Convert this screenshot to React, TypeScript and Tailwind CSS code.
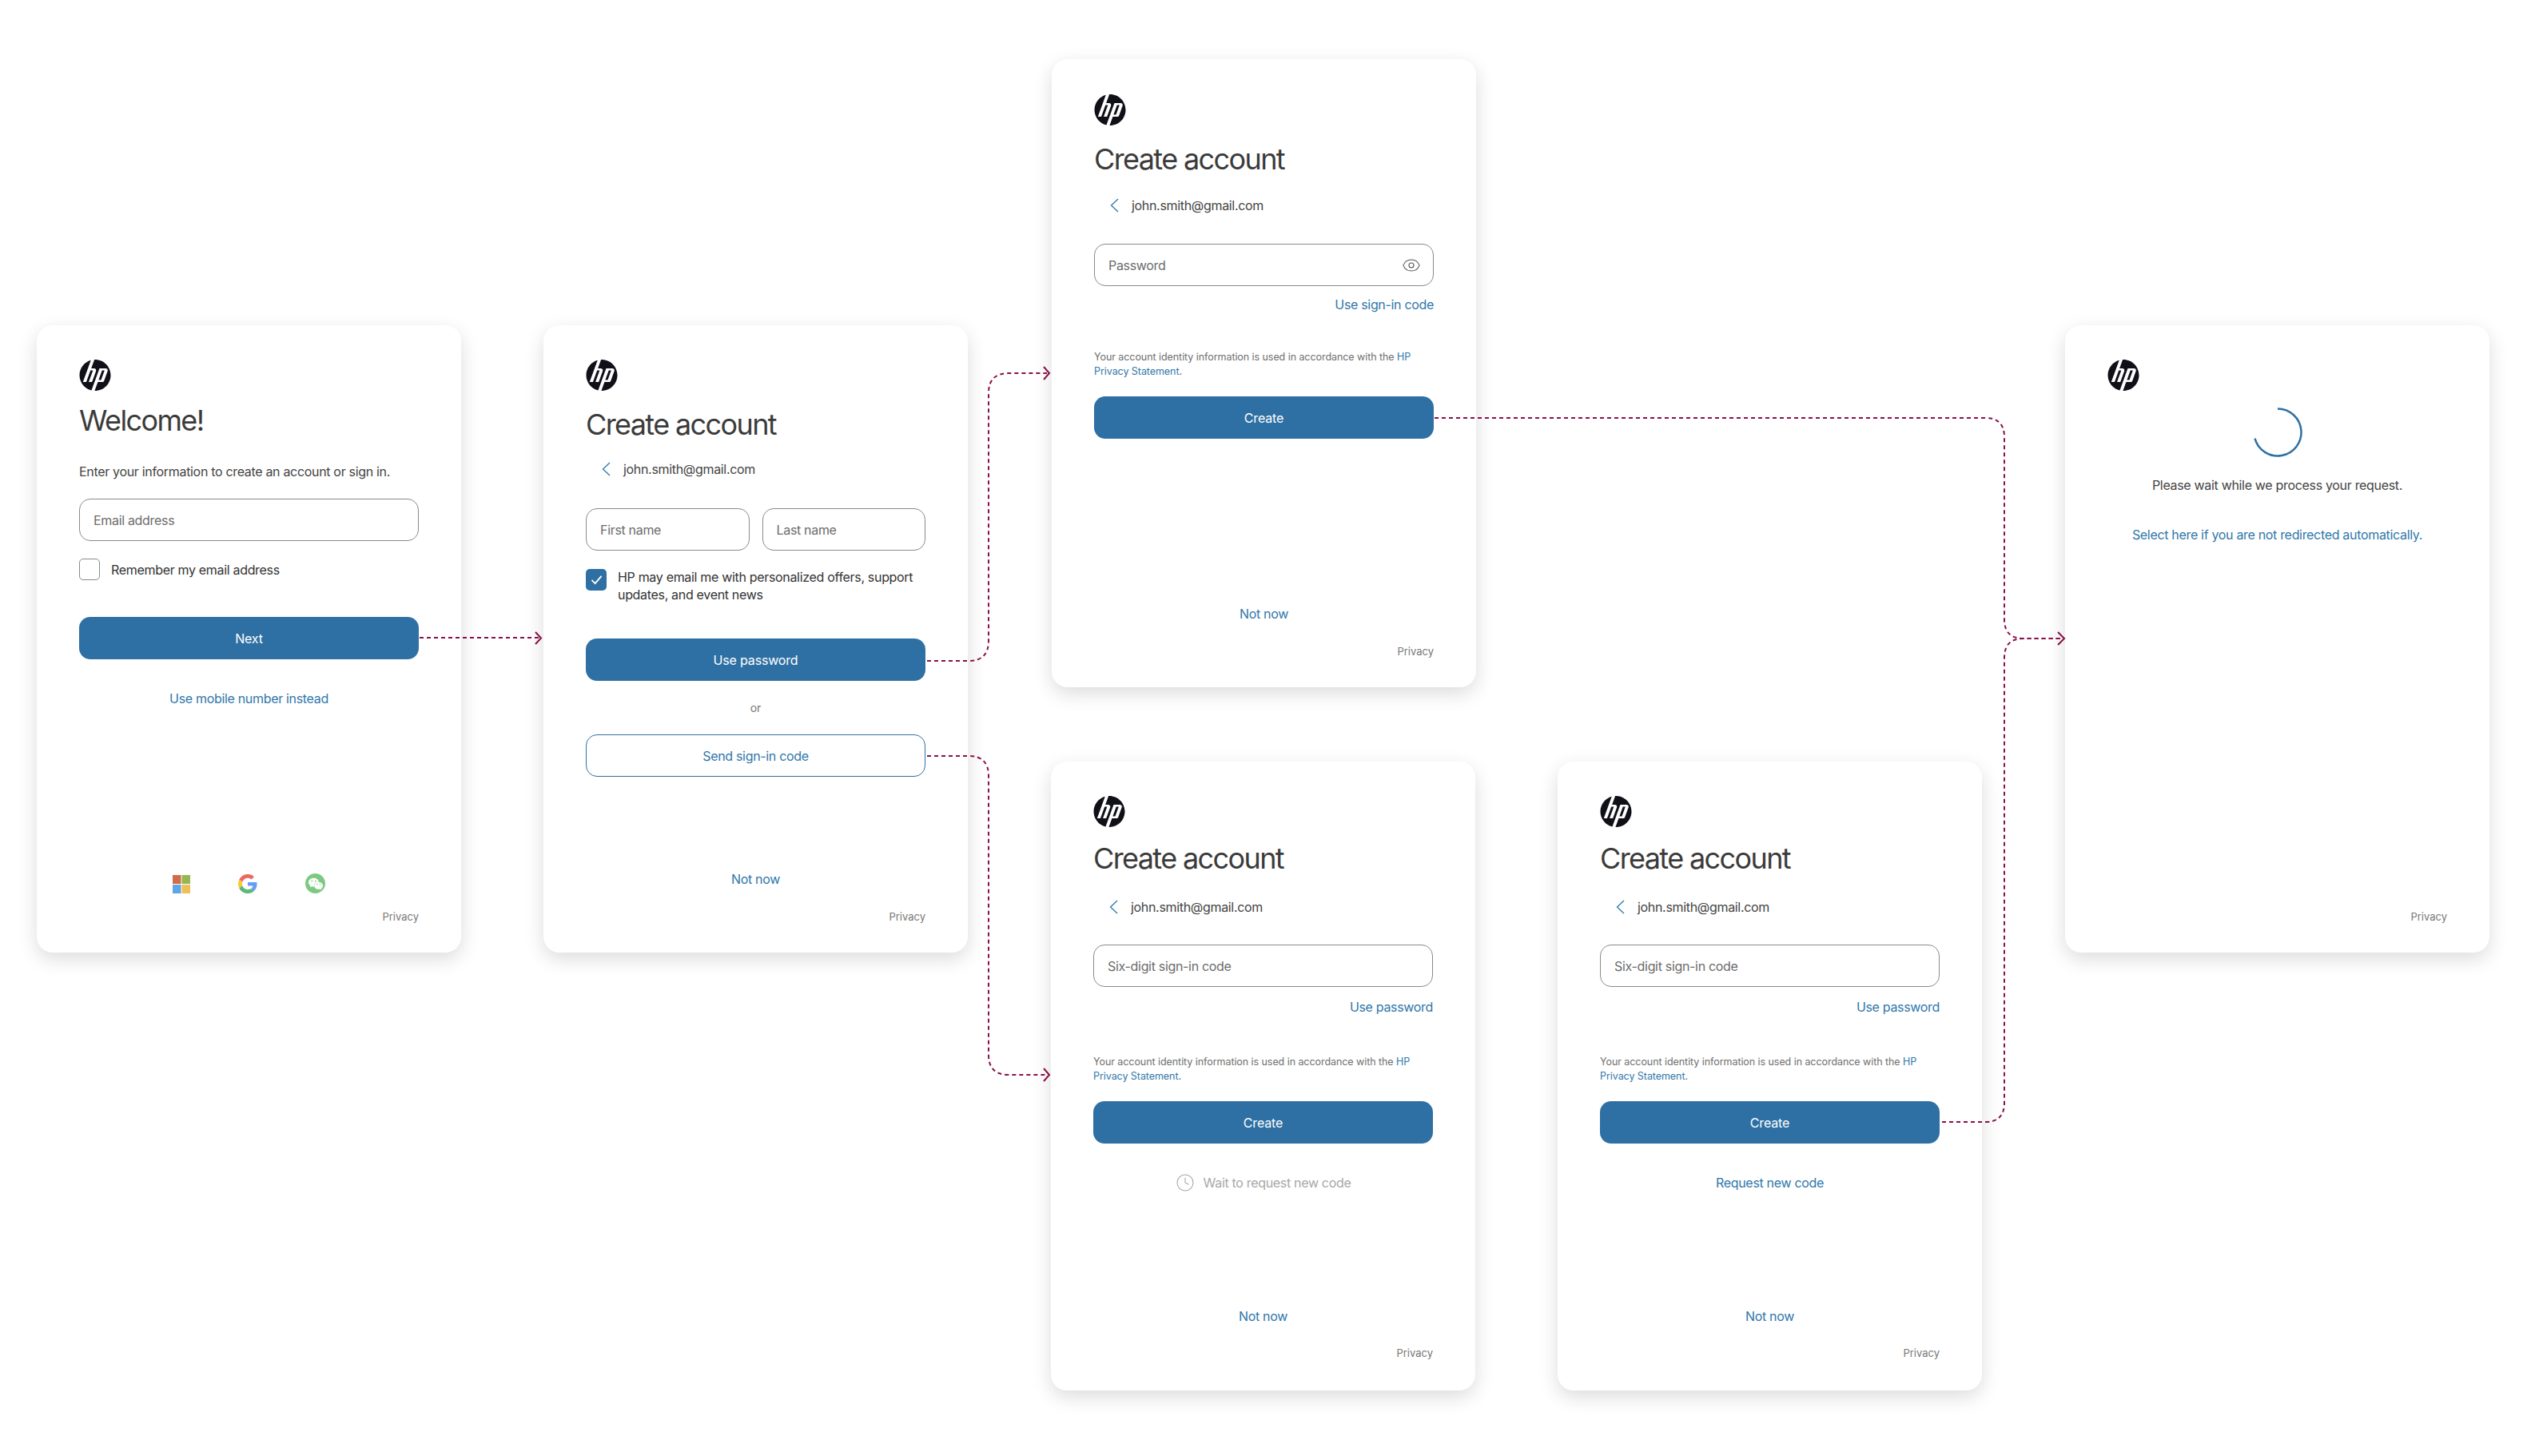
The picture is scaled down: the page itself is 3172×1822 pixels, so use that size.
import type { ReactNode } from "react";
import { Clock, Eye } from "lucide-react";
import { SiHp, SiWechat } from "react-icons/si";

const arrowPaths = [
  "M525 798 H675",
  "M1160 827 H1212 Q1237 827 1237 802 V492 Q1237 467 1262 467 H1310",
  "M1160 946 H1212 Q1237 946 1237 971 V1320 Q1237 1345 1262 1345 H1310",
  "M1795 523 H2484 Q2508 523 2508 547 V775 Q2508 799 2532 799 H2580",
  "M2430 1404 H2484 Q2508 1404 2508 1380 V823 Q2508 799 2532 799 H2580",
];

const arrowHeads = [
  "M670 791 L677 798.5 L670 806",
  "M1306 459 L1313 467 L1306 475",
  "M1306 1337 L1313 1345 L1306 1353",
  "M2575 791 L2583 799 L2575 807",
];

function Card({ className, children }: { className: string; children: ReactNode }) {
  return (
    <div
      className={`flex h-[785px] w-[531px] flex-col rounded-[20px] bg-white px-[53px] shadow-[0_8px_24px_rgba(0,0,0,0.14)] ${className}`}
    >
      {children}
    </div>
  );
}

function Logo() {
  return <SiHp className="h-[39px] w-[40px] shrink-0 text-[#101018]" />;
}

function Title({ className, children }: { className: string; children: ReactNode }) {
  return (
    <h1 className={`h-[44px] text-[36px] leading-[44px] tracking-[-0.045em] text-[#3b3b3b] ${className}`}>{children}</h1>
  );
}

function EmailRow({ className }: { className: string }) {
  return (
    <div className={`flex h-[24px] items-center pl-[20px] ${className}`}>
      <svg viewBox="0 0 11 18" className="h-[18px] w-[11px] text-[#2f77aa]" fill="none" stroke="currentColor" strokeWidth="1.3">
        <path d="M10 1 L1.5 9 L10 17" />
      </svg>
      <span className="ml-[16px] text-[16px] leading-[24px] tracking-[-0.02em] text-[#444444]">john.smith@gmail.com</span>
    </div>
  );
}

function Field({ label, className = "", children }: { label: string; className?: string; children?: ReactNode }) {
  return (
    <div
      className={`flex h-[53px] items-center justify-between rounded-[14px] border-[1.5px] border-[#8a8a8a] bg-white pl-[17px] pr-[15px] text-[16px] tracking-[-0.02em] text-[#6c6c6c] ${className}`}
    >
      <span>{label}</span>
      {children}
    </div>
  );
}

function PrimaryButton({ label, className }: { label: string; className: string }) {
  return (
    <button className={`h-[53px] w-full shrink-0 rounded-[14px] bg-[#2e70a3] text-[16px] tracking-[-0.01em] text-white ${className}`}>
      {label}
    </button>
  );
}

function TextLink({ label, className }: { label: string; className: string }) {
  return <a className={`block h-[24px] text-center text-[16px] leading-[24px] tracking-[-0.02em] text-[#2f77aa] ${className}`}>{label}</a>;
}

function Privacy() {
  return <div className="h-[20px] text-right text-[13px] leading-[20px] text-[#777777]">Privacy</div>;
}

function Notice({ className }: { className: string }) {
  return (
    <p className={`text-[12.5px] leading-[18px] tracking-[-0.005em] text-[#6f6f6f] ${className}`}>
      Your account identity information is used in accordance with the <a className="text-[#2f77aa]">HP Privacy Statement</a>.
    </p>
  );
}

function CodeCard({ className, children }: { className: string; children: ReactNode }) {
  return (
    <Card className={`pb-[37px] pt-[43px] ${className}`}>
      <Logo />
      <Title className="mt-[17px]">Create account</Title>
      <EmailRow className="mt-[27px]" />
      <Field label="Six-digit sign-in code" className="mt-[35px] shrink-0" />
      <TextLink label="Use password" className="mt-[13px] text-right" />
      <Notice className="mt-[48px]" />
      <PrimaryButton label="Create" className="mt-[22px]" />
      {children}
      <TextLink label="Not now" className="mb-[24px] mt-auto" />
      <Privacy />
    </Card>
  );
}

function SocialRow() {
  return (
    <div className="mb-[19px] mt-auto flex items-end justify-center gap-[60px] opacity-80">
      <svg viewBox="0 0 22 23" className="h-[23px] w-[22px]">
        <rect x="0" y="0" width="10.5" height="11" fill="#c4481c" />
        <rect x="11.5" y="0" width="10.5" height="11" fill="#7ba626" />
        <rect x="0" y="12" width="10.5" height="11" fill="#3a8fdc" />
        <rect x="11.5" y="12" width="10.5" height="11" fill="#ecb02f" />
      </svg>
      <svg viewBox="0 0 48 48" className="h-[24px] w-[24px]">
        <path fill="#ea4335" d="M24 9.5c3.5 0 6.700 1.200 9.100 3.600l6.800-6.800C35.900 2.400 30.500 0 24 0 14.600 0 6.500 5.400 2.600 13.200l7.900 6.200C12.400 13.700 17.700 9.500 24 9.500z" />
        <path fill="#4285f4" d="M47 24.500c0-1.600-.1-3.100-.4-4.500H24v9h13c-.6 3-2.200 5.500-4.800 7.200l7.700 6C44.400 38 47 31.900 47 24.500z" />
        <path fill="#fbbc05" d="M10.500 28.600c-.5-1.400-.8-3-.8-4.600s.3-3.200.8-4.600l-7.900-6.200C.9 16.500 0 20.100 0 24s.9 7.500 2.600 10.800l7.900-6.200z" />
        <path fill="#34a853" d="M24 48c6.500 0 11.900-2.100 15.900-5.800l-7.700-6c-2.200 1.400-4.900 2.300-8.200 2.300-6.300 0-11.600-4.200-13.500-9.900l-7.900 6.200C6.500 42.600 14.600 48 24 48z" />
      </svg>
      <span className="flex h-[25px] w-[25px] items-center justify-center rounded-full bg-[#5cbd63]">
        <SiWechat className="h-[18px] w-[18px] text-white" />
      </span>
    </div>
  );
}

export default function App() {
  return (
    <div className="relative flex h-[1822px] w-[3172px] items-start gap-[103px] overflow-hidden bg-white pl-[46px] font-['Inter',sans-serif]">
      <Card className="mt-[407px] pb-[35px] pt-[43px]">
        <Logo />
        <Title className="mt-[15px]">Welcome!</Title>
        <p className="mt-[30px] text-[16px] leading-[24px] tracking-[-0.02em] text-[#444444]">
          Enter your information to create an account or sign in.
        </p>
        <Field label="Email address" className="mt-[22px] shrink-0" />
        <div className="mt-[22px] flex h-[27px] items-center">
          <span className="h-[27px] w-[26px] rounded-[5px] border-[1.5px] border-[#8a8a8a]" />
          <span className="ml-[14px] text-[16px] tracking-[-0.02em] text-[#333333]">Remember my email address</span>
        </div>
        <PrimaryButton label="Next" className="mt-[46px]" />
        <TextLink label="Use mobile number instead" className="mt-[37px]" />
        <SocialRow />
        <Privacy />
      </Card>

      <Card className="mt-[407px] pb-[35px] pt-[43px]">
        <Logo />
        <Title className="mt-[20px]">Create account</Title>
        <EmailRow className="mt-[22px]" />
        <div className="mt-[37px] grid grid-cols-2 gap-[16px]">
          <Field label="First name" />
          <Field label="Last name" />
        </div>
        <div className="mt-[22px] flex items-start">
          <span className="mt-[1px] flex h-[27px] w-[26px] shrink-0 items-center justify-center rounded-[5px] bg-[#2e70a3]">
            <svg viewBox="0 0 16 14" className="h-[13px] w-[15px]" fill="none" stroke="white" strokeWidth="2">
              <path d="M1.500 7.500 L6 12 L14.500 2" />
            </svg>
          </span>
          <p className="ml-[14px] text-[16px] leading-[22px] tracking-[-0.02em] text-[#333333]">
            HP may email me with personalized offers, support updates, and event news
          </p>
        </div>
        <PrimaryButton label="Use password" className="mt-[44px]" />
        <div className="mt-[22px] h-[24px] text-center text-[14px] leading-[24px] text-[#777777]">or</div>
        <button className="mt-[21px] h-[53px] shrink-0 rounded-[14px] border-[1.5px] border-[#2e70a3] text-[16px] tracking-[-0.02em] text-[#2f77aa]">
          Send sign-in code
        </button>
        <TextLink label="Not now" className="mb-[25px] mt-auto" />
        <Privacy />
      </Card>

      <div className="ml-[1px] flex flex-col">
        <Card className="ml-[1px] mt-[74px] h-[786px] pb-[35px] pt-[44px]">
          <Logo />
          <Title className="mt-[20px]">Create account</Title>
          <EmailRow className="mt-[24px]" />
          <Field label="Password" className="mt-[36px] shrink-0">
            <Eye className="h-[24px] w-[24px] text-[#555555]" strokeWidth={1.1} />
          </Field>
          <TextLink label="Use sign-in code" className="mt-[11px] text-right" />
          <Notice className="mt-[45px]" />
          <PrimaryButton label="Create" className="mt-[22px]" />
          <TextLink label="Not now" className="mb-[25px] mt-auto" />
          <Privacy />
        </Card>
        <div className="mt-[93px] flex gap-[103px]">
          <CodeCard className="h-[787px]">
            <div className="mt-[37px] flex h-[24px] items-center justify-center gap-[11px] text-[16px] tracking-[-0.02em] text-[#a8a8a8]">
              <Clock className="h-[24px] w-[24px]" strokeWidth={1.1} />
              <span>Wait to request new code</span>
            </div>
          </CodeCard>
          <CodeCard className="h-[787px]">
            <TextLink label="Request new code" className="mt-[37px]" />
          </CodeCard>
        </div>
      </div>

      <Card className="ml-[1px] mt-[407px] pb-[35px] pt-[43px]">
        <Logo />
        <svg viewBox="0 0 62 62" className="mx-auto mt-[21px] h-[62px] w-[62px] shrink-0" fill="none" stroke="#2e70a3" strokeWidth="2.5">
          <path d="M31 1.500 A29.500 29.500 0 1 1 2.500 38.600" />
        </svg>
        <p className="mt-[23px] text-center text-[16px] leading-[24px] tracking-[-0.02em] text-[#444444]">
          Please wait while we process your request.
        </p>
        <TextLink label="Select here if you are not redirected automatically." className="-mx-[10px] mt-[38px] whitespace-nowrap" />
        <div className="mt-auto">
          <Privacy />
        </div>
      </Card>

      <svg className="pointer-events-none absolute inset-0 h-full w-full" viewBox="0 0 3172 1822" fill="none" stroke="#8a1048">
        {arrowPaths.map((d) => (
          <path key={d} d={d} strokeWidth="2" strokeDasharray="5 4" />
        ))}
        {arrowHeads.map((d) => (
          <path key={d} d={d} strokeWidth="2" />
        ))}
      </svg>
    </div>
  );
}
